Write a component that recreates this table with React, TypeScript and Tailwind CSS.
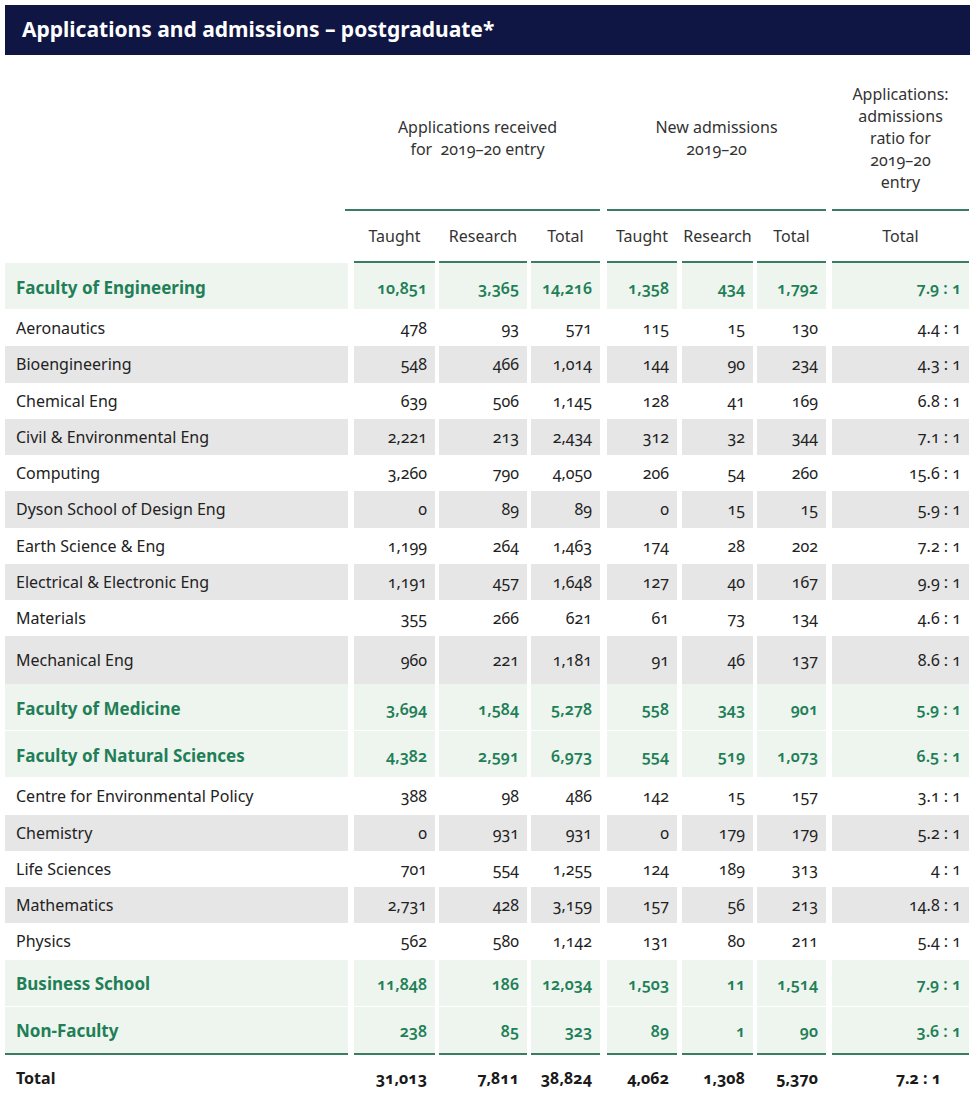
import React from 'react';

type Row = {
  name: string;
  values: string[];
  kind: 'faculty' | 'dept';
  shade?: boolean;
  tall?: boolean;
  last?: boolean;
};

const cols = [
  { w: 'w-[81px]', ml: 'ml-[6px]' },
  { w: 'w-[88px]', ml: 'ml-[4px]' },
  { w: 'w-[69px]', ml: 'ml-[4px]' },
  { w: 'w-[70px]', ml: 'ml-[7px]' },
  { w: 'w-[71px]', ml: 'ml-[5px]' },
  { w: 'w-[69px]', ml: 'ml-[4px]' },
  { w: 'w-[137px]', ml: 'ml-[6px]' },
];

const rows: Row[] = [
  { name: 'Faculty of Engineering', kind: 'faculty', values: ['10,851', '3,365', '14,216', '1,358', '434', '1,792', '7.9 : 1'] },
  { name: 'Aeronautics', kind: 'dept', values: ['478', '93', '571', '115', '15', '130', '4.4 : 1'] },
  { name: 'Bioengineering', kind: 'dept', shade: true, values: ['548', '466', '1,014', '144', '90', '234', '4.3 : 1'] },
  { name: 'Chemical Eng', kind: 'dept', values: ['639', '506', '1,145', '128', '41', '169', '6.8 : 1'] },
  { name: 'Civil & Environmental Eng', kind: 'dept', shade: true, values: ['2,221', '213', '2,434', '312', '32', '344', '7.1 : 1'] },
  { name: 'Computing', kind: 'dept', values: ['3,260', '790', '4,050', '206', '54', '260', '15.6 : 1'] },
  { name: 'Dyson School of Design Eng', kind: 'dept', shade: true, values: ['0', '89', '89', '0', '15', '15', '5.9 : 1'] },
  { name: 'Earth Science & Eng', kind: 'dept', values: ['1,199', '264', '1,463', '174', '28', '202', '7.2 : 1'] },
  { name: 'Electrical & Electronic Eng', kind: 'dept', shade: true, values: ['1,191', '457', '1,648', '127', '40', '167', '9.9 : 1'] },
  { name: 'Materials', kind: 'dept', values: ['355', '266', '621', '61', '73', '134', '4.6 : 1'] },
  { name: 'Mechanical Eng', kind: 'dept', shade: true, tall: true, values: ['960', '221', '1,181', '91', '46', '137', '8.6 : 1'] },
  { name: 'Faculty of Medicine', kind: 'faculty', values: ['3,694', '1,584', '5,278', '558', '343', '901', '5.9 : 1'] },
  { name: 'Faculty of Natural Sciences', kind: 'faculty', values: ['4,382', '2,591', '6,973', '554', '519', '1,073', '6.5 : 1'] },
  { name: 'Centre for Environmental Policy', kind: 'dept', values: ['388', '98', '486', '142', '15', '157', '3.1 : 1'] },
  { name: 'Chemistry', kind: 'dept', shade: true, values: ['0', '931', '931', '0', '179', '179', '5.2 : 1'] },
  { name: 'Life Sciences', kind: 'dept', values: ['701', '554', '1,255', '124', '189', '313', '4 : 1'] },
  { name: 'Mathematics', kind: 'dept', shade: true, values: ['2,731', '428', '3,159', '157', '56', '213', '14.8 : 1'] },
  { name: 'Physics', kind: 'dept', values: ['562', '580', '1,142', '131', '80', '211', '5.4 : 1'] },
  { name: 'Business School', kind: 'faculty', values: ['11,848', '186', '12,034', '1,503', '11', '1,514', '7.9 : 1'] },
  { name: 'Non-Faculty', kind: 'faculty', last: true, values: ['238', '85', '323', '89', '1', '90', '3.6 : 1'] },
];

const total = ['31,013', '7,811', '38,824', '4,062', '1,308', '5,370', '7.2 : 1'];

const subHeads = ['Taught', 'Research', 'Total', 'Taught', 'Research', 'Total', 'Total'];

function DataRow({ row }: { row: Row }) {
  const faculty = row.kind === 'faculty';
  const bg = faculty ? 'bg-[#eef5ef]' : row.shade ? 'bg-[#e6e6e6]' : 'bg-white';
  const height = faculty ? 'h-[46px] pt-[3px]' : row.tall ? 'h-[48px]' : 'h-[36.25px]';
  const text = faculty ? 'text-[#1f7f57]' : 'text-[#222]';
  return (
    <div className={`flex ${faculty && !row.last ? 'border-b border-white' : ''}`}>
      <div className={`w-[343px] ${height} ${bg} flex items-center pl-[11px] ${faculty ? 'text-[17px] font-bold' : 'text-[16px]'} ${text}`}>
        {row.name}
      </div>
      {row.values.map((v, i) => (
        <div
          key={i}
          className={`${cols[i].w} ${cols[i].ml} ${height} ${bg} flex items-center justify-end pr-[8px] text-[16px] ${faculty ? 'font-semibold' : ''} ${text}`}
        >
          {v}
        </div>
      ))}
    </div>
  );
}

export default function App() {
  return (
    <div className="bg-white w-[976px] min-h-[1098px] font-['Noto_Sans',sans-serif] oldstyle-nums">
      <div className="pt-[5px] pl-[5px] pr-[6px]">
        <div className="h-[50px] bg-[#0f1644] flex items-center pl-[17px]">
          <h1 className="text-white text-[21px] font-bold">Applications and admissions – postgraduate*</h1>
        </div>

        {/* group headings */}
        <div className="flex h-[154px] pt-[12px] text-[16px] leading-[22px] text-[#333]">
          <div className="w-[340px]" />
          <div className="w-[255px] flex items-center justify-center text-center pl-[10px]">
            <span>Applications received<br />for&nbsp; 2019–20 entry</span>
          </div>
          <div className="w-[219px] ml-[7px] flex items-center justify-center text-center">
            <span>New admissions<br />2019–20</span>
          </div>
          <div className="w-[137px] ml-[6px] flex items-center justify-center text-center">
            <span>Applications:<br />admissions<br />ratio for<br />2019–20<br />entry</span>
          </div>
        </div>
        <div className="flex h-[2px]">
          <div className="w-[340px]" />
          <div className="w-[255px] bg-[#3b7d62]" />
          <div className="w-[219px] ml-[7px] bg-[#3b7d62]" />
          <div className="w-[137px] ml-[6px] bg-[#3b7d62]" />
        </div>

        {/* sub headings */}
        <div className="flex h-[52px] text-[16px] text-[#333]">
          <div className="w-[343px]" />
          {subHeads.map((h, i) => (
            <div key={i} className={`${cols[i].w} ${cols[i].ml} flex flex-col`}>
              <div className="flex-1 flex items-center justify-center">{h}</div>
              <div className="h-[2px] bg-[#3b7d62]" />
            </div>
          ))}
        </div>

        {rows.map((r) => (
          <DataRow key={r.name} row={r} />
        ))}

        <div className="flex h-[2px]">
          <div className="w-[343px] bg-[#3b7d62]" />
          {cols.map((c, i) => (
            <div key={i} className={`${c.w} ${c.ml} bg-[#3b7d62]`} />
          ))}
        </div>

        <div className="flex h-[46px] font-bold text-[16px] text-[#1a1a1a]">
          <div className="w-[343px] flex items-center pl-[11px]">Total</div>
          {total.map((v, i) => (
            <div key={i} className={`${cols[i].w} ${cols[i].ml} flex items-center justify-end ${i === 6 ? 'pr-[28px]' : 'pr-[8px]'}`}>
              {v}
            </div>
          ))}
        </div>
      </div>
    </div>
  );
}
